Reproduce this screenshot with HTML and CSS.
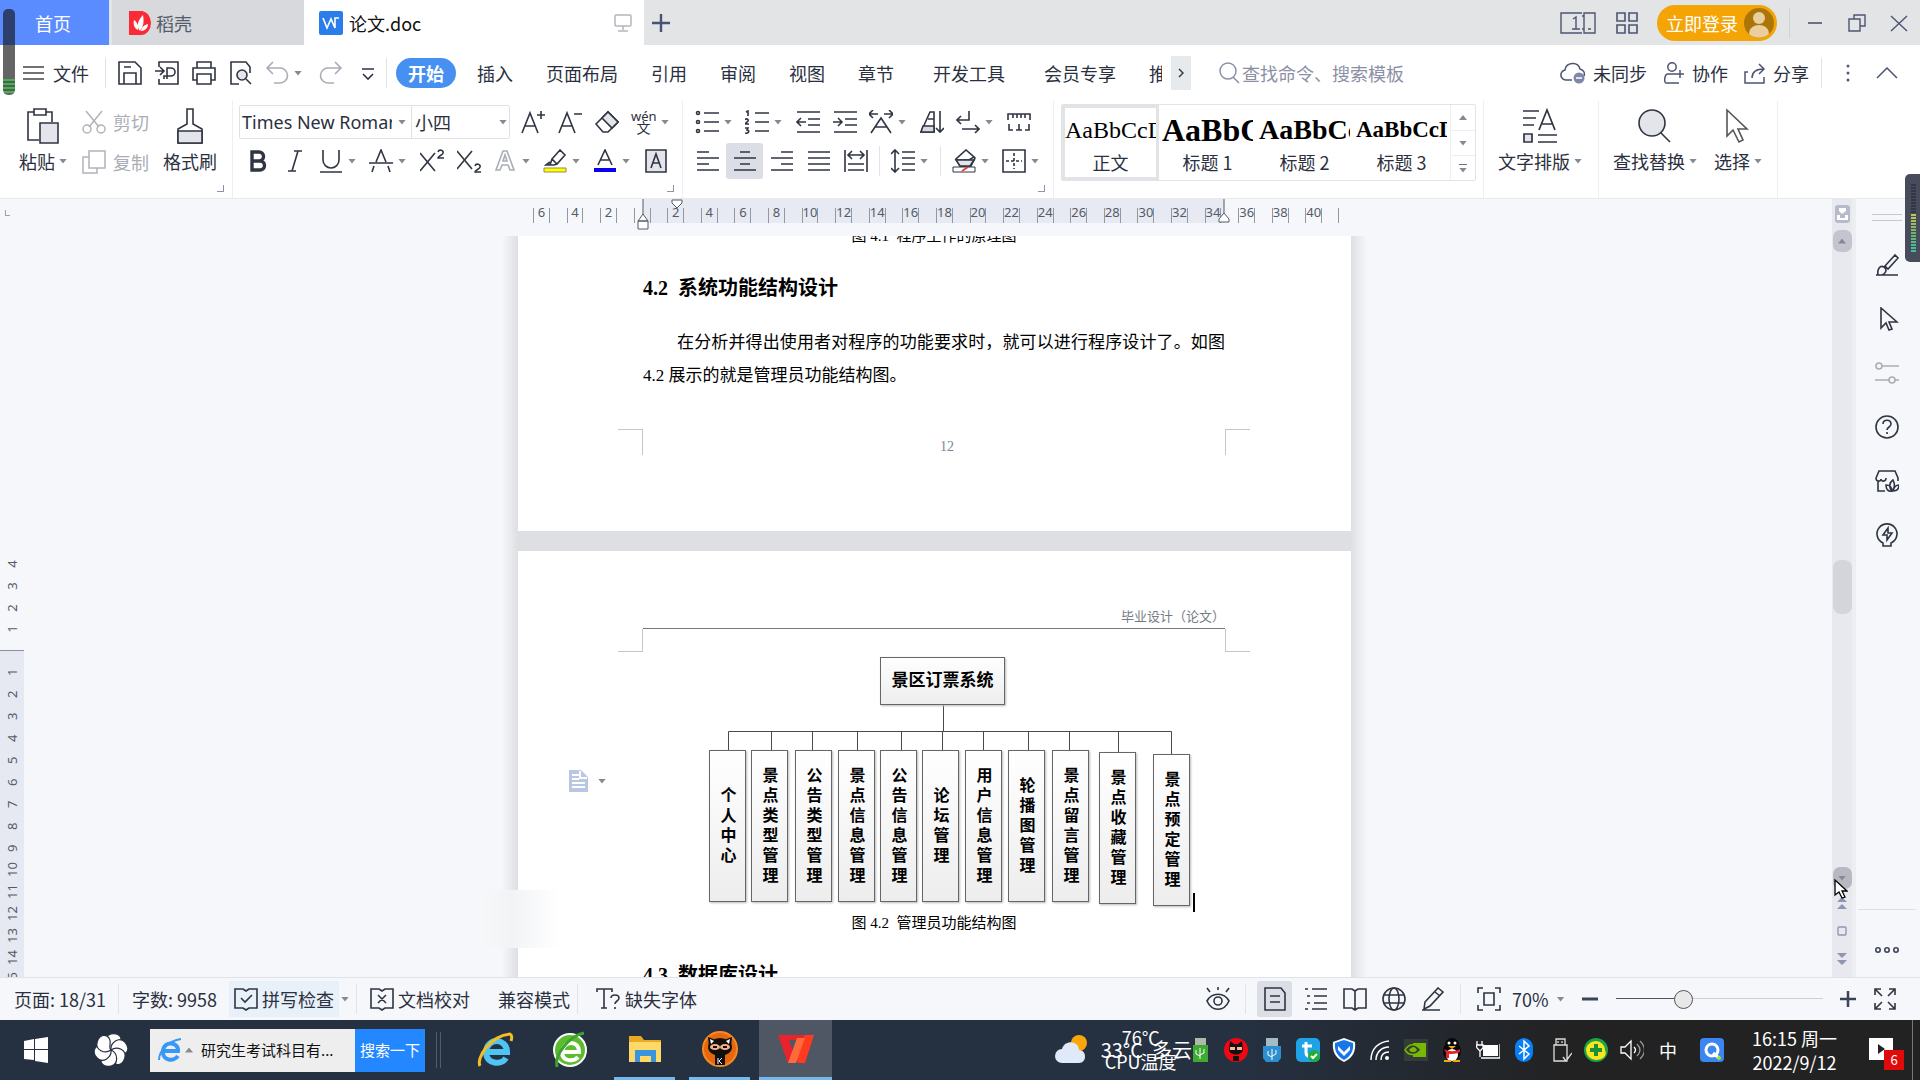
FILE: index.html
```html
<!DOCTYPE html>
<html lang="zh-CN">

<head>
<meta charset="utf-8">
<title>论文.doc</title>
<link rel="stylesheet" href="styles.css">
</head>

<body>

<header class="titlebar">
  <button type="button" class="tab tab-home">首页</button>
  <button type="button" class="tab tab-store">
    <svg width="22" height="24" viewBox="0 0 22 24"><path d="M0 0h12a10 12 0 0 1 0 24H0z" fill="#fb2a36"/><path d="M11 20C7 15 9 9 14 4c1 6 1 11-3 16zM9 19c-4-2-5-6-4-10 3 2 5 6 4 10zM12 20c1-4 3-6 7-7 0 4-3 7-7 7z" fill="#fff"/></svg>
    稻壳
  </button>
  <button type="button" class="tab tab-doc">
    <svg width="24" height="24" viewBox="0 0 24 24"><rect width="24" height="24" rx="2" fill="#2b7de9"/><path d="M4 7l4 10 4-9 4 9V7h4" fill="none" stroke="#fff" stroke-width="1.6"/></svg>
    论文.doc
    <svg class="tab-screen" width="18" height="18" viewBox="0 0 18 18" fill="none" stroke="#b3b6bd" stroke-width="1.5"><rect x="1" y="1" width="16" height="11" rx="1"/><path d="M9 12v4M4 17h10"/></svg>
  </button>
  <button type="button" class="tab-add" aria-label="新建"><svg width="20" height="20" viewBox="0 0 20 20" stroke="#4a5273" stroke-width="2.4"><path d="M10 1v18M1 10h18"/></svg></button>
  <div class="window-tools">
    <button type="button" aria-label="分屏"><svg width="36" height="24" viewBox="0 0 36 24" fill="none" stroke="#4d5470" stroke-width="1.4"><path d="M22 2H1v20h21"/><path d="M13 8l3-2v12M12 18h8M24 2h11v20H24zM28 18h3M22 5h2M22 18h2"/></svg></button>
    <button type="button" aria-label="应用"><svg width="22" height="22" viewBox="0 0 22 22" fill="none" stroke="#4d5470" stroke-width="1.6"><path d="M1 1h8v8H1zM13 1h8v8h-8zM1 13h8v8H1zM13 13h8v8h-8z"/></svg></button>
    <button type="button" class="login">立即登录
      <svg width="30" height="30" viewBox="0 0 30 30"><circle cx="15" cy="15" r="15" fill="#ab7508"/><circle cx="15" cy="10" r="6" fill="#e8cf9c"/><path d="M5 26c0-12 20-12 20 0a15 15 0 0 1-20 0z" fill="#e8cf9c"/></svg>
    </button>
    <i class="rule"></i>
    <button type="button" aria-label="最小化"><svg width="18" height="18" viewBox="0 0 18 18" stroke="#4d5470" stroke-width="1.6"><path d="M2 9h14"/></svg></button>
    <button type="button" aria-label="还原"><svg width="18" height="18" viewBox="0 0 18 18" fill="none" stroke="#4d5470" stroke-width="1.4"><path d="M1 5h11v12H1zM6 5V1h11v11h-5"/></svg></button>
    <button type="button" aria-label="关闭"><svg width="18" height="18" viewBox="0 0 18 18" stroke="#4d5470" stroke-width="1.4"><path d="M1 2l16 15M17 2L1 17"/></svg></button>
  </div>
</header>

<nav class="menubar">
  <button type="button" class="file">
    <svg width="21" height="16" viewBox="0 0 21 16" stroke="#444" stroke-width="1.3"><path d="M0 2h21M0 8h21M0 14h21"/></svg>
    文件
  </button>
  <i class="rule"></i>
  <div class="quick">
    <button type="button" class="tool" aria-label="保存"><svg class="ico" viewBox="0 0 24 24"><path d="M1 1h16l6 6v16H1zM6 23V12h12v11M6 6h7"/></svg></button>
    <button type="button" class="tool" aria-label="输出"><svg class="ico" viewBox="0 0 24 24"><path d="M4 6V1h19v22H4v-5M0 10h8M5 6l4 4-4 4M12 18V7h4a4 4 0 0 1 0 8h-7v3"/></svg></button>
    <button type="button" class="tool" aria-label="打印"><svg class="ico" viewBox="0 0 24 24"><path d="M5 7V1h14v6M5 19H1V7h22v12h-4M5 13h14v10H5z"/></svg></button>
    <button type="button" class="tool" aria-label="打印预览"><svg class="ico" viewBox="0 0 24 24"><path d="M10 23H2V1h15l4 5v6"/><circle cx="13" cy="14" r="5" fill="#e3e5ea"/><path d="M17 18l5 5"/></svg></button>
    <button type="button" class="tool tool-menu off" aria-label="撤销"><svg class="ico" viewBox="0 0 24 24"><path d="M8 1L2 7l6 6M2 7h13a7 7 0 0 1 0 15H9"/></svg><i class="caret"></i></button>
    <button type="button" class="tool off" aria-label="恢复"><svg class="ico" viewBox="0 0 24 24"><path d="M16 1l6 6-6 6M22 7H9a7 7 0 0 0 0 15h6"/></svg></button>
    <button type="button" class="tool" aria-label="更多"><svg class="ico" viewBox="0 0 24 24"><path d="M6 8h12M7 13l5 5 5-5"/></svg></button>
  </div>
  <i class="rule"></i>
  <div class="tabs">
    <button type="button" class="active">开始</button>
    <button type="button">插入</button>
    <button type="button">页面布局</button>
    <button type="button">引用</button>
    <button type="button">审阅</button>
    <button type="button">视图</button>
    <button type="button">章节</button>
    <button type="button" class="spaced">开发工具</button>
    <button type="button" class="spaced">会员专享</button>
    <button type="button">推荐</button>
  </div>
  <button type="button" class="tabs-next" aria-label="下一组"><svg width="6" height="10" viewBox="0 0 6 10" fill="none" stroke="#333" stroke-width="1.4"><path d="M1 1l4 4-4 4"/></svg></button>
  <label class="search">
    <svg width="22" height="22" viewBox="0 0 22 22" fill="none" stroke="#8b90a5" stroke-width="1.5"><circle cx="10" cy="9" r="8"/><path d="M15 15l6 6"/></svg>
    <input type="text" placeholder="查找命令、搜索模板" aria-label="查找命令">
  </label>
  <div class="share">
    <button type="button"><svg width="26" height="22" viewBox="0 0 26 22" fill="none" stroke="#4d5470" stroke-width="1.5"><path d="M12 18H7A5 5 0 0 1 5 8C6 0 18-1 20 7c4 1 5 4 4 7"/><circle cx="19" cy="16" r="5.500" fill="#7f87a8" stroke="none"/><path d="M16 16h6" stroke="#fff"/></svg>未同步</button>
    <button type="button"><svg width="22" height="22" viewBox="0 0 22 22" fill="none" stroke="#4d5470" stroke-width="1.5"><circle cx="9" cy="5" r="4.200"/><path d="M14 12H5c-4 0-4 9-2 9h13M17 8v8M13 12h8"/></svg>协作</button>
    <button type="button"><svg width="22" height="22" viewBox="0 0 22 22" fill="none" stroke="#4d5470" stroke-width="1.5"><path d="M15 2l5 5-5 5M20 7c-8 0-12 3-12 9M4 10H1v11h19v-6"/></svg>分享</button>
    <i class="rule"></i>
    <button type="button" class="dots" aria-label="更多"><svg width="4" height="18" viewBox="0 0 4 18" fill="#555c72"><circle cx="2" cy="2" r="1.500"/><circle cx="2" cy="9" r="1.500"/><circle cx="2" cy="16" r="1.500"/></svg></button>
    <button type="button" aria-label="收起"><svg width="22" height="12" viewBox="0 0 22 12" fill="none" stroke="#4d5470" stroke-width="1.5"><path d="M1 11L11 1l10 10"/></svg></button>
  </div>
</nav>

<section class="ribbon">
  <div class="group clipboard">
    <button type="button" class="big paste">
      <svg width="34" height="36" viewBox="0 0 34 36" fill="none" stroke="#2f3542" stroke-width="1.6"><path d="M8 4H2v28h11M20 4h6v10M8 1h12v6H8z"/><path d="M14 15h18v20H14z" fill="#e3e5ea"/></svg>
      <span>粘贴<i class="caret"></i></span>
    </button>
    <div class="stack">
      <button type="button"><svg width="24" height="24" viewBox="0 0 24 24" fill="none" stroke="#b0b3ba" stroke-width="1.5"><path d="M4 1l13 16M20 1L7 17"/><circle cx="5" cy="19" r="4"/><circle cx="19" cy="19" r="4"/></svg>剪切</button>
      <button type="button"><svg width="24" height="24" viewBox="0 0 24 24" fill="none" stroke="#b0b3ba" stroke-width="1.5"><path d="M7 1h16v17H7zM7 7H1v16h14v-5"/></svg>复制</button>
    </div>
    <button type="button" class="big brush">
      <svg width="30" height="36" viewBox="0 0 30 36" fill="none" stroke="#2f3542" stroke-width="1.6"><path d="M12 16V1h6v15l9 5v14H3V21z"/><path d="M3 23h24v12H3z" fill="#e3e5ea"/></svg>
      <span>格式刷</span>
    </button>
    <i class="corner"></i>
  </div>

  <div class="group font">
    <div class="row">
      <div class="combo"><input type="text" class="family" value="Times New Roman" aria-label="字体"><i class="caret"></i><input type="text" class="size" value="小四" aria-label="字号"><i class="caret"></i></div>
      <button type="button" class="tool" aria-label="增大字号"><svg class="ico" viewBox="0 0 24 24"><path d="M1 23L9 3l8 20M4 16h10M16 5h8M20 1v8"/></svg></button>
      <button type="button" class="tool" aria-label="减小字号"><svg class="ico" viewBox="0 0 24 24"><path d="M1 23L9 3l8 20M4 16h10M16 4h8"/></svg></button>
      <button type="button" class="tool" aria-label="清除格式"><svg class="ico" viewBox="0 0 24 24"><path d="M1 14L13 2l10 10-10 10H8z"/><path d="M7 8l6-6 10 10-6 6z" fill="#e3e5ea"/></svg></button>
      <button type="button" class="tool tool-menu pinyin"><span>wén<b>文</b></span><i class="caret"></i></button>
    </div>
    <div class="row">
      <button type="button" class="tool" aria-label="加粗"><svg class="ico heavy" viewBox="0 0 24 24"><path d="M6 3h7a4 4 0 0 1 0 9H6zM6 12h8a4 4 0 0 1 0 9H6z"/></svg></button>
      <button type="button" class="tool" aria-label="倾斜"><svg class="ico" viewBox="0 0 24 24"><path d="M11 2h8M5 22h8M15 2L9 22"/></svg></button>
      <button type="button" class="tool tool-menu" aria-label="下划线"><svg class="ico" viewBox="0 0 24 24"><path d="M4 1v10a8 8 0 0 0 16 0V1M1 23h22"/></svg><i class="caret"></i></button>
      <button type="button" class="tool tool-menu" aria-label="删除线"><svg class="ico" viewBox="0 0 24 24"><path d="M7 13l5-12 5 12M5 17l-2 6M19 17l2 6M0 14h24"/></svg><i class="caret"></i></button>
      <button type="button" class="tool" aria-label="上标"><svg class="ico" viewBox="0 0 24 24"><path d="M0 4l15 18M15 4L0 22M18 3c1-3 6-2 5 1 0 2-5 3-5 5h6"/></svg></button>
      <button type="button" class="tool" aria-label="下标"><svg class="ico" viewBox="0 0 24 24"><path d="M0 2l15 18M15 2L0 20M18 17c1-3 6-2 5 1 0 2-5 3-5 5h6"/></svg></button>
      <button type="button" class="tool tool-menu off" aria-label="文字效果"><svg class="ico" viewBox="0 0 24 24"><path d="M3 21L10 2h4l7 19h-4l-2-5H9l-2 5zM10 12h4l-2-6z"/></svg><i class="caret"></i></button>
      <button type="button" class="tool tool-menu" aria-label="突出显示"><svg class="ico" viewBox="0 0 24 24"><path d="M9 10l8-9 5 5-8 9zM9 10l-2 6h4l3-1M7 13l-4 3h5"/><path d="M1 19h22v4H1z" fill="#ff0" stroke="#8f8f4a" stroke-width="1"/></svg><i class="caret"></i></button>
      <button type="button" class="tool tool-menu" aria-label="字体颜色"><svg class="ico" viewBox="0 0 24 24"><path d="M5 16l7-15 7 15M8 11h8"/><path d="M1 19h22v4H1z" fill="#0a00f0" stroke="none"/></svg><i class="caret"></i></button>
      <button type="button" class="tool" aria-label="字符底纹"><svg class="ico" viewBox="0 0 24 24"><path d="M2 1h20v22H2z" fill="#e3e5ea"/><path d="M7 19l5-14 5 14M9 14h6"/></svg></button>
    </div>
    <i class="corner"></i>
  </div>

  <div class="group para">
    <div class="row">
      <button type="button" class="tool tool-menu" aria-label="项目符号"><svg class="ico" viewBox="0 0 24 24"><path d="M9 3h15M9 12h15M9 21h15"/><circle cx="3" cy="3" r="1.500"/><circle cx="3" cy="12" r="1.500"/><circle cx="3" cy="21" r="1.500"/></svg><i class="caret"></i></button>
      <button type="button" class="tool tool-menu" aria-label="编号"><svg class="ico" viewBox="0 0 24 24"><path d="M10 3h14M10 12h14M10 21h14M1 2l2-1v5M0 10c1-2 4-1 3 1l-3 3h4M0 18h3l-1 2c3 0 2 4-2 3"/></svg><i class="caret"></i></button>
      <button type="button" class="tool" aria-label="减少缩进"><svg class="ico" viewBox="0 0 24 24"><path d="M1 2h23M12 9h12M12 15h12M1 22h23M10 12H1M5 8l-4 4 4 4"/></svg></button>
      <button type="button" class="tool" aria-label="增加缩进"><svg class="ico" viewBox="0 0 24 24"><path d="M1 2h23M12 9h12M12 15h12M1 22h23M0 12h8M5 8l4 4-4 4"/></svg></button>
      <button type="button" class="tool tool-menu" aria-label="中文版式"><svg class="ico" viewBox="0 0 24 24"><path d="M2 23L12 8l10 15M6 17h12M0 4h9M4 0L0 4l4 4M24 4h-9M20 0l4 4-4 4"/></svg><i class="caret"></i></button>
      <button type="button" class="tool" aria-label="排序"><svg class="ico" viewBox="0 0 24 24"><path d="M1 22L10 2h4v20z"/><path d="M3 16h11v6H1z" fill="#d9dbe0"/><path d="M8 9h6M20 1v21M16 18l4 4 4-4"/></svg></button>
      <button type="button" class="tool tool-menu" aria-label="显示标记"><svg class="ico" viewBox="0 0 24 24"><path d="M13 1v9H1M5 6l-4 4 4 4M6 19h17M19 15l4 4-4 4"/></svg><i class="caret"></i></button>
      <button type="button" class="tool" aria-label="制表位"><svg class="ico" viewBox="0 0 24 24"><path d="M1 10V4h22v6M6 4v4M10 4v4M14 4v4M18 4v4M2 14v6h4M22 14v6h-4M9 20h6M12 20v-6"/></svg></button>
    </div>
    <div class="row">
      <button type="button" class="tool" aria-label="左对齐"><svg class="ico" viewBox="0 0 24 24"><path d="M1 3h12M1 9h22M1 15h12M1 21h22"/></svg></button>
      <button type="button" class="tool on" aria-label="居中"><svg class="ico" viewBox="0 0 24 24"><path d="M7 3h10M1 9h22M7 15h10M1 21h22"/></svg></button>
      <button type="button" class="tool" aria-label="右对齐"><svg class="ico" viewBox="0 0 24 24"><path d="M11 3h12M1 9h22M11 15h12M1 21h22"/></svg></button>
      <button type="button" class="tool" aria-label="两端对齐"><svg class="ico" viewBox="0 0 24 24"><path d="M1 3h22M1 9h22M1 15h22M1 21h22"/></svg></button>
      <button type="button" class="tool" aria-label="分散对齐"><svg class="ico" viewBox="0 0 24 24"><path d="M1 1v22M23 1v22M4 15h16M4 21h16M4 6h16M8 2L4 6l4 4M16 2l4 4-4 4"/></svg></button>
      <i class="rule"></i>
      <button type="button" class="tool tool-menu" aria-label="行距"><svg class="ico" viewBox="0 0 24 24"><path d="M11 3h13M11 9h13M11 15h13M11 21h13M4 1v22M0 5l4-4 4 4M0 19l4 4 4-4"/></svg><i class="caret"></i></button>
      <i class="rule"></i>
      <button type="button" class="tool tool-menu" aria-label="底纹"><svg class="ico" viewBox="0 0 24 24"><path d="M5 11h12l5-3-8-7-10 9 4 7h11l4-8-2-2"/><path d="M4 11h18l-4 6H8z" fill="#e3e5ea"/><path d="M1 18h22v5H1z" stroke-width="1" fill="#fff"/><path d="M10 22l6-4" stroke="#e33"/></svg><i class="caret"></i></button>
      <button type="button" class="tool tool-menu" aria-label="边框"><svg class="ico" viewBox="0 0 24 24"><path d="M1 1h22v22H1z"/><path d="M12 4v16M4 12h16" stroke-dasharray="3 2"/></svg><i class="caret"></i></button>
    </div>
    <i class="corner"></i>
  </div>

  <div class="group styles">
    <div class="gallery">
      <button type="button" class="style picked"><span class="body-text">AaBbCcDd</span>正文</button>
      <button type="button" class="style"><span class="h1">AaBbCc</span>标题 1</button>
      <button type="button" class="style"><span class="h2">AaBbCc</span>标题 2</button>
      <button type="button" class="style"><span class="h3">AaBbCcDd</span>标题 3</button>
      <div class="gallery-nav">
        <button type="button" aria-label="上一行"><i class="caret up"></i></button>
        <button type="button" aria-label="下一行"><i class="caret"></i></button>
        <button type="button" class="expand" aria-label="展开"><i class="caret"></i></button>
      </div>
    </div>
  </div>

  <div class="group typeset">
    <button type="button" class="big">
      <svg width="36" height="36" viewBox="0 0 36 36" fill="none" stroke="#2f3542" stroke-width="1.7"><path d="M1 3h16M1 10h13M1 17h11M17 22L25 2l8 20M20 16h10M16 27h19M16 34h19"/><path d="M2 26h8v8H2z" fill="#e3e5ea"/></svg>
      <span>文字排版<i class="caret"></i></span>
    </button>
  </div>

  <div class="group edit">
    <button type="button" class="big">
      <svg width="36" height="36" viewBox="0 0 36 36" fill="none" stroke="#2f3542" stroke-width="1.6"><circle cx="15" cy="15" r="13" fill="#e3e5ea"/><path d="M24 25l9 9"/></svg>
      <span>查找替换<i class="caret"></i></span>
    </button>
    <button type="button" class="big">
      <svg width="36" height="36" viewBox="0 0 36 36" fill="none" stroke="#555" stroke-width="1.6"><path d="M7 2v26l6-6 6 12 4-2-5-11h9z"/></svg>
      <span>选择<i class="caret"></i></span>
    </button>
  </div>
</section>

<main class="workspace">
  <div class="ruler">
    <i class="ruler-tab"></i>
    <div class="scale">
      <span>6</span><span>4</span><span>2</span><span></span><span>2</span><span>4</span><span>6</span><span>8</span><span>10</span><span>12</span><span>14</span><span>16</span><span>18</span><span>20</span><span>22</span><span>24</span><span>26</span><span>28</span><span>30</span><span>32</span><span>34</span><span>36</span><span>38</span><span>40</span>
      <i class="last"></i>
      <svg class="mark mark-first" width="12" height="10" viewBox="0 0 12 10"><path d="M1 1h10v3L6 9 1 4z"/></svg>
      <svg class="mark mark-left" width="12" height="32" viewBox="0 0 12 32"><path d="M6 0v16M1 22l5-7 5 7zM1 22h10v8H1z"/></svg>
      <svg class="mark mark-right" width="12" height="24" viewBox="0 0 12 24"><path d="M6 0v14M1 23v-3l5-6 5 6v3z"/></svg>
    </div>
  </div>

  <div class="vruler">
    <div class="above"><span>4</span><span>3</span><span>2</span><span>1</span></div>
    <div class="below"><span>1</span><span>2</span><span>3</span><span>4</span><span>5</span><span>6</span><span>7</span><span>8</span><span>9</span><span>10</span><span>11</span><span>12</span><span>13</span><span>14</span><span>15</span></div>
  </div>

  <div class="canvas">
    <div class="pages">
      <article class="page">
        <p class="caption caption-cut">图 4.1&nbsp; 程序工作的原理图</p>
        <h2>4.2&nbsp; 系统功能结构设计</h2>
        <p class="text">在分析并得出使用者对程序的功能要求时，就可以进行程序设计了。如图 4.2 展示的就是管理员功能结构图。</p>
        <footer class="margins"><i></i><span>12</span><i></i></footer>
      </article>

      <article class="page page-next">
        <header>毕业设计（论文）</header>
        <div class="margins bottom"><i></i><i></i></div>
        <div class="diagram">
          <svg width="582" height="260" viewBox="0 0 582 260" fill="none" stroke="#4a4a4a"><path d="M300.500 53v26M85.500 98V79.500h443V102M128.500 79v19M169.500 79v19M214.500 79v19M258.500 79v19M299.500 79v19M340.500 79v19M385.500 79v19M426.500 79v19M475.500 79v21"/></svg>
          <div class="root">景区订票系统</div>
          <ul>
            <li><span>个人中心</span></li>
            <li><span>景点类型管理</span></li>
            <li><span>公告类型管理</span></li>
            <li><span>景点信息管理</span></li>
            <li><span>公告信息管理</span></li>
            <li><span>论坛管理</span></li>
            <li><span>用户信息管理</span></li>
            <li><span>轮播图管理</span></li>
            <li><span>景点留言管理</span></li>
            <li><span>景点收藏管理</span></li>
            <li><span>景点预定管理</span></li>
          </ul>
          <i class="cursor"></i>
        </div>
        <p class="caption">图 4.2&nbsp; 管理员功能结构图</p>
        <h2>4.3&nbsp; 数据库设计</h2>
        <div class="paste-options">
          <svg width="19" height="22" viewBox="0 0 19 22"><path d="M0 0h12l7 7v15H0z" fill="#b9c7e4"/><path d="M3 5h7M3 9h7M3 13h13M3 17h13M11 1v7h7" stroke="#fff" stroke-width="2" fill="none"/></svg>
          <i class="caret"></i>
        </div>
        <i class="haze"></i>
      </article>
    </div>
  </div>

  <div class="scrollbar">
    <svg class="scroll-mode" width="15" height="18" viewBox="0 0 15 18"><rect width="15" height="18" rx="3" fill="#b7bacb"/><path d="M4 3h7v3L7 9 4 6zM2 10h3v3h5v-3h3v5H2z" fill="#fff"/></svg>
    <button type="button" class="scroll-up" aria-label="向上"><i class="caret up"></i></button>
    <i class="thumb"></i>
    <button type="button" class="scroll-down" aria-label="向下"><i class="caret"></i></button>
    <div class="browse">
      <svg width="10" height="12" viewBox="0 0 10 12" fill="#8f96b3"><path d="M0 5l5-5 5 5zM0 12l5-5 5 5z"/></svg>
      <svg width="10" height="10" viewBox="0 0 10 10" fill="none" stroke="#8f96b3" stroke-width="1.4"><rect x="1" y="1" width="8" height="8" rx="1"/></svg>
      <svg width="10" height="12" viewBox="0 0 10 12" fill="#8f96b3"><path d="M0 0l5 5 5-5zM0 7l5 5 5-5z"/></svg>
    </div>
    <svg class="pointer" width="14" height="20" viewBox="0 0 14 20"><path d="M1 1v15l4-3 3 6 3-1-3-6h5z" fill="#fff" stroke="#000" stroke-width="1.300"/></svg>
  </div>

  <aside class="sidebar">
    <i class="grip"></i>
    <button type="button" aria-label="样式"><svg class="ico" viewBox="0 0 24 24"><path d="M1 22h22M10 13L20 2l3 3-10 11zM3 22c-1-6 2-10 6-8 4 3 1 7-2 8"/></svg></button>
    <button type="button" aria-label="选择"><svg class="ico" viewBox="0 0 24 24"><path d="M6 1v20l5-5 3 7 3-1-3-7h8z"/></svg></button>
    <button type="button" class="off" aria-label="设置"><svg class="ico" viewBox="0 0 24 24"><circle cx="4" cy="5" r="3"/><path d="M7 5h17M0 19h14M20 19h4"/><circle cx="17" cy="19" r="3"/></svg></button>
    <button type="button" aria-label="帮助"><svg class="ico" viewBox="0 0 24 24"><circle cx="12" cy="12" r="11"/><path d="M8 9c0-5 8-5 8 0 0 3-4 3-4 6M12 17v2"/></svg></button>
    <button type="button" aria-label="素材"><svg class="ico" viewBox="0 0 24 24"><path d="M3 12v10h7M1 9l3-7h16l3 7v3M1 9c0 4 5 4 5 1 0 3 5 3 5-1M17 22c-4-4-2-9 1-11 2 4 2 8-1 11zM17 22c-4 1-6-2-6-6 4 0 6 3 6 6zM18 22c1-4 3-6 6-6 0 4-2 6-6 6z"/></svg></button>
    <button type="button" aria-label="推荐"><svg class="ico" viewBox="0 0 24 24"><path d="M8 23v-3a10 10 0 1 1 8 0v3zM13 5l-5 7h4v5l5-7h-4z"/></svg></button>
    <button type="button" class="more" aria-label="更多"><svg width="24" height="8" viewBox="0 0 24 8" fill="none" stroke="#3d4358" stroke-width="1.6"><circle cx="3" cy="4" r="2.200"/><circle cx="12" cy="4" r="2.200"/><circle cx="21" cy="4" r="2.200"/></svg></button>
  </aside>
</main>

<section class="statusbar">
  <span class="pages-count">页面: 18/31</span>
  <i class="rule"></i>
  <span class="words">字数: 9958</span>
  <button type="button" class="spell"><svg class="ico" viewBox="0 0 24 24"><path d="M1 2h8l3 2 3-2h8v19h-8l-3 2-3-2H1zM7 11l4 4 7-7"/></svg>拼写检查</button>
  <i class="caret"></i>
  <i class="rule"></i>
  <button type="button" class="proof"><svg class="ico" viewBox="0 0 24 24"><path d="M1 2h8l3 2 3-2h8v19h-8l-3 2-3-2H1zM8 8l8 8M16 8l-8 8"/></svg>文档校对</button>
  <span class="compat">兼容模式</span>
  <i class="rule"></i>
  <button type="button" class="fonts"><svg class="ico" viewBox="0 0 24 24"><path d="M1 5V2h15v3M8 2v19M5 21h6M15 11c0-4 8-4 8 0 0 3-4 3-4 6M19 20v2"/></svg>缺失字体</button>
  <div class="views">
    <button type="button" class="tool" aria-label="护眼模式"><svg class="ico" viewBox="0 0 24 24"><path d="M1 14c5-9 17-9 22 0-5 11-17 11-22 0zM12 0v3M1 1l3 4M23 1l-3 4"/><circle cx="12" cy="14" r="4"/></svg></button>
    <i class="rule"></i>
    <button type="button" class="tool on" aria-label="页面视图"><svg class="ico" viewBox="0 0 24 24"><path d="M2 1h16l4 5v17H2zM7 9h10M7 15h10"/></svg></button>
    <button type="button" class="tool" aria-label="大纲"><svg class="ico" viewBox="0 0 24 24"><path d="M1 2h3M8 2h15M3 9h3M10 9h13M3 16h3M10 16h13M1 22h3M8 22h15"/></svg></button>
    <button type="button" class="tool" aria-label="阅读版式"><svg class="ico" viewBox="0 0 24 24"><path d="M1 2h8l3 2 3-2h8v19h-8l-3 2-3-2H1zM12 4v19"/></svg></button>
    <button type="button" class="tool" aria-label="Web版式"><svg class="ico" viewBox="0 0 24 24"><circle cx="12" cy="12" r="11"/><ellipse cx="12" cy="12" rx="5" ry="11"/><path d="M2 8h20M2 16h20"/></svg></button>
    <button type="button" class="tool" aria-label="写作模式"><svg class="ico" viewBox="0 0 24 24"><path d="M4 15L17 1l5 4L9 19l-6 3zM1 23h18M14 5l5 4"/></svg></button>
    <i class="rule"></i>
    <button type="button" class="tool" aria-label="最佳显示比例"><svg class="ico" viewBox="0 0 24 24"><path d="M1 6V1h5M18 1h5v5M23 18v5h-5M6 23H1v-5M7 6h10v12H7z"/></svg></button>
    <button type="button" class="zoom">70%<i class="caret"></i></button>
    <button type="button" class="step" aria-label="缩小"><svg width="16" height="16" viewBox="0 0 16 16" stroke="#3d4358" stroke-width="3"><path d="M0 8h16"/></svg></button>
    <input type="range" min="0" max="100" value="31" aria-label="显示比例">
    <button type="button" class="step plus" aria-label="放大"><svg width="16" height="16" viewBox="0 0 16 16" stroke="#3d4358" stroke-width="2.500"><path d="M0 8h16M8 0v16"/></svg></button>
    <button type="button" class="tool" aria-label="全屏"><svg class="ico" viewBox="0 0 24 24"><path d="M2 8V2h6M2 2l7 7M16 2h6v6M22 2l-7 7M2 16v6h6M2 22l7-7M22 16v6h-6M22 22l-7-7"/></svg></button>
  </div>
</section>

<footer class="taskbar">
  <button type="button" class="start" aria-label="开始菜单"><svg width="26" height="26" viewBox="0 0 26 26" fill="#fff"><path d="M1 4l10-2v10H1zM12 2l13-2v12H12zM1 13h10v10L1 22zM12 13h13v13l-13-2z"/></svg></button>
  <button type="button" class="swirl" aria-label="助手">
    <svg width="34" height="34" viewBox="0 0 34 34" fill="#fff" stroke="#253040" stroke-width="1.200">
      <path id="petal" d="M17 17C10 14 9 3 17 1c8-2 12 4 9 9-2 4-8 3-9 7z"/>
      <use href="#petal" transform="rotate(60 17 17)"/>
      <use href="#petal" transform="rotate(120 17 17)"/>
      <use href="#petal" transform="rotate(180 17 17)"/>
      <use href="#petal" transform="rotate(240 17 17)"/>
      <use href="#petal" transform="rotate(300 17 17)"/>
    </svg>
  </button>
  <form class="desk-search">
    <svg width="26" height="26" viewBox="0 0 26 26" fill="none" stroke="#3898f5"><path d="M5 14h16c1-9-14-11-15 0-1 10 11 11 15 5" stroke-width="4"/><path d="M2 23C2 14 11 4 24 2" stroke-width="2"/></svg>
    <i class="caret up"></i>
    <input type="text" value="研究生考试科目有..." aria-label="搜索">
    <button type="button">搜索一下</button>
  </form>
  <i class="handle"></i>
  <div class="apps">
    <button type="button" aria-label="Internet Explorer"><svg width="38" height="38" viewBox="0 0 38 38" fill="none"><path d="M10 21h21c0-14-20-15-21 0 0 13 16 13 20 6" stroke="#4fc4f3" stroke-width="6"/><path d="M4 35C0 27 14 5 34 3c2 1 2 4 1 7" stroke="#f4bd21" stroke-width="3"/></svg></button>
    <button type="button" aria-label="360浏览器"><svg width="38" height="38" viewBox="0 0 38 38" fill="none"><circle cx="19" cy="19" r="16" fill="#5cbc2e" stroke="#fff" stroke-width="2"/><path d="M11 21h17c0-12-15-12-17 0 0 10 12 10 16 5" stroke="#fff" stroke-width="4"/><path d="M6 36C3 24 18 5 33 2" stroke="#3ea32b" stroke-width="3"/></svg></button>
    <button type="button" class="open" aria-label="资源管理器"><svg width="36" height="32" viewBox="0 0 36 32"><path d="M2 3h12l3 4h17v22H2z" fill="#e9aa23"/><path d="M2 9h32v20H2z" fill="#ffd968"/><path d="M8 17h21v12h-5v-6H13v6H8z" fill="#3a94dc"/></svg></button>
    <button type="button" class="open" aria-label="游戏助手"><svg width="38" height="38" viewBox="0 0 38 38"><circle cx="19" cy="19" r="17" fill="#e9670c" stroke="#f58a25" stroke-width="2"/><ellipse cx="19" cy="17" rx="12" ry="9" fill="#111"/><path d="M7 7l8 3-7 7zM31 7l-8 3 7 7zM14 25h10v10H14z" fill="#111"/><path d="M9 9l4 2-3 3zM29 9l-4 2 3 3z" fill="#fff"/><ellipse cx="14" cy="17" rx="5" ry="3" fill="#f8b183"/><ellipse cx="24" cy="17" rx="5" ry="3" fill="#f8b183"/><path d="M12 17h4M22 17h4" stroke="#111" stroke-width="2"/><path d="M17 28v6M21 28l-3 3 3 3" stroke="#fff" fill="none"/></svg></button>
    <button type="button" class="open current" aria-label="WPS"><svg width="38" height="30" viewBox="0 0 38 30"><path d="M1 1h27l-2 5H12l5 14-4 9h-2z" fill="#e8232c"/><path d="M28 1h9L28 29h-7l-3-8z" fill="#ff3a20"/><path d="M20 4h8l-9 25h-8z" fill="#ff6a3b"/></svg></button>
  </div>
  <div class="tray">
    <div class="weather">
      <svg width="34" height="32" viewBox="0 0 34 32"><circle cx="25" cy="9" r="8" fill="#fba70c"/><path d="M8 29a7 7 0 0 1 0-14c3-10 17-8 17 1 8 0 8 13 0 13z" fill="#dfe9f7"/></svg>
      <span>33°C&nbsp; 多云</span>
      <p class="cpu">76℃<br>CPU温度</p>
    </div>
    <svg class="tray-ico" viewBox="0 0 24 24"><path d="M7 0h11v7H7z" fill="#aeb8ad"/><path d="M5 7h15v17H5z" fill="#3faa32"/><path d="M12 21V10M8 12v4l4 2M16 11v4l-4 2" stroke="#fff" fill="none"/></svg>
    <svg class="tray-ico" viewBox="0 0 24 24"><circle cx="12" cy="12" r="12" fill="#f00713"/><path d="M6 3l4 3h4l4-3 1 9c-1 6-13 6-14 0zM9 18h6v5H9z" fill="#111"/><path d="M6 9h5v3H6zM13 9h5v3h-5z" fill="#f6b79a"/></svg>
    <svg class="tray-ico" viewBox="0 0 24 24"><path d="M6 0h12v8H6z" fill="#a4bac7"/><path d="M3 8h18v12l-3 4H6l-3-4z" fill="#2c8fcf"/><path d="M12 22V11M8 13v4l4 2M16 12v4l-4 2" stroke="#fff" fill="none"/></svg>
    <svg class="tray-ico" viewBox="0 0 24 24"><rect width="24" height="24" rx="5" fill="#1fa3e8"/><path d="M10 4v10c0 6 7 5 8 1M6 8h10" stroke="#fff" stroke-width="3" fill="none"/><circle cx="18" cy="18" r="6" fill="#1fad3a"/><path d="M15 18l2 2 4-4" stroke="#fff" stroke-width="2" fill="none"/></svg>
    <svg class="tray-ico" viewBox="0 0 24 24"><path d="M12 0l11 4c1 9-2 16-11 20C3 20 0 13 1 4z" fill="#fff"/><path d="M12 2l9 3c1 7-2 13-9 17C5 18 2 12 3 5z" fill="#1677ea"/><path d="M6 8l6 6 6-6v4l-6 6-6-6z" fill="#fff"/></svg>
    <svg class="tray-ico" viewBox="0 0 24 24"><path d="M3 22C3 11 10 4 21 3M8 22c0-7 5-13 13-13M13 22c0-5 3-8 8-8" fill="none" stroke="#fff" stroke-width="1.500"/><circle cx="19" cy="20" r="2" fill="#fff"/></svg>
    <svg class="tray-ico" viewBox="0 0 24 24"><path d="M0 1h24v22H0z" fill="#353b37"/><path d="M9 5h13v14H9z" fill="#75b900"/><path d="M1 12c4-7 11-7 16 0-5 6-12 6-16 0z" fill="#353b37" stroke="#75b900" stroke-width="1.500"/><path d="M5 12c3-4 6-4 8 0-2 3-6 3-8 0" fill="#75b900"/></svg>
    <svg class="tray-ico" viewBox="0 0 24 24"><ellipse cx="12" cy="13" rx="9" ry="10" fill="#080808"/><circle cx="12" cy="7" r="7" fill="#080808"/><ellipse cx="12" cy="17" rx="6" ry="6" fill="#fff"/><circle cx="9" cy="5" r="1.500" fill="#fff"/><circle cx="15" cy="5" r="1.500" fill="#fff"/><path d="M8 8h8l-4 3zM4 22h7v2H4zM13 22h7v2h-7z" fill="#f7a800"/><path d="M4 11c5 3 11 3 16 0v3c-4 2-8 2-11 2v4H6v-5z" fill="#e1232c"/></svg>
    <svg class="tray-ico" viewBox="0 0 24 24"><path d="M7 7h15v11H7z" fill="#fff"/><path d="M5 20h19V6M1 3v4M6 3v4M0 7h7v3l-3 3-3-3zM4 13v6" fill="none" stroke="#fff" stroke-width="1.300"/></svg>
    <svg class="tray-ico" viewBox="0 0 24 24"><rect x="3" width="18" height="24" rx="9" fill="#087ff5"/><path d="M7 8l10 8-5 5V3l5 5-10 8" fill="none" stroke="#fff" stroke-width="1.500"/></svg>
    <svg class="tray-ico" viewBox="0 0 24 24" fill="none" stroke="#ddd" stroke-width="1.300"><path d="M8 1h9v6H8zM6 7h13v16H6zM10 3v2M14 3v2M15 19l3 4 6-8"/></svg>
    <svg class="tray-ico" viewBox="0 0 24 24"><circle cx="12" cy="12" r="12" fill="#18a548"/><path d="M12 3a9 9 0 0 1 9 9c3 6-3 10-9 10A10 10 0 0 1 2 12C2 7 7 3 12 3z" fill="#fbe41c"/><path d="M12 6v12M6 12h12" stroke="#18903c" stroke-width="4"/></svg>
    <svg class="tray-ico" viewBox="0 0 24 24" fill="none" stroke="#fff" stroke-width="1.300"><path d="M1 9h4l6-6v18l-6-6H1zM14 9c2 2 2 4 0 6"/><path d="M17 6c4 4 4 8 0 12M20 3c6 6 6 12 0 18" stroke="#999"/></svg>
    <span class="ime">中</span>
    <svg class="tray-ico qb" viewBox="0 0 24 24"><rect width="24" height="24" rx="4" fill="#3b86f0"/><circle cx="12" cy="12" r="6" fill="none" stroke="#fff" stroke-width="3"/><path d="M13 15l6 5" stroke="#fff" stroke-width="3"/><circle cx="19" cy="20" r="2" fill="#a0e52b"/></svg>
    <time>16:15 周一<br>2022/9/12</time>
    <div class="notice"><svg width="24" height="24" viewBox="0 0 24 24"><path d="M0 0h24v22H0z" fill="#fff"/><path d="M9 6l7 5-7 5z" fill="#222"/></svg><b>6</b></div>
    <i class="peek"></i>
  </div>
</footer>

<i class="meter meter-left"></i>
<i class="meter meter-right"></i>

</body>
</html>
```
FILE: styles.css
```css
* {
  box-sizing: border-box;
}

body {
  margin: 0;
  height: 100vh;
  display: flex;
  flex-direction: column;
  overflow: hidden;
  background: #f5f7fa;
  color: #2b3040;
  font: 18px/24px "Noto Sans CJK SC", sans-serif;
}

button,
input {
  margin: 0;
  padding: 0;
  border: 0;
  background: none;
  color: inherit;
  font: inherit;
}

button {
  display: flex;
  align-items: center;
  white-space: nowrap;
}

svg {
  flex: none;
  display: block;
}

/* общие мелочи: значки, стрелки, разделители */

.ico {
  width: 24px;
  height: 24px;
  fill: none;
  stroke: #2f3542;
  stroke-width: 1.6;
}

.heavy {
  stroke-width: 3.4;
}

.off .ico {
  stroke: #a9adb5;
}

.caret {
  flex: none;
  width: 8px;
  height: 5px;
  background: #858996;
  clip-path: polygon(0 0, 100% 0, 50% 100%);
}

.caret.up {
  clip-path: polygon(0 100%, 100% 100%, 50% 0);
}

.rule {
  flex: none;
  width: 1px;
  height: 30px;
  background: #e1e3e7;
}

.tool {
  flex: none;
  width: 37px;
  height: 36px;
  justify-content: center;
}

.tool-menu {
  width: 50px;
  justify-content: flex-start;
  gap: 5px;
  padding-left: 6px;
}

.tool.on {
  background: #dbdee4;
  border-radius: 3px;
}

/* заголовок окна */

.titlebar {
  flex: none;
  height: 45px;
  display: flex;
  align-items: stretch;
  background: #e2e4e6;
}

.tab-home {
  width: 109px;
  padding-left: 35px;
  background: #5b8cff;
  color: #fff;
}

.tab-store {
  width: 192px;
  margin-left: 3px;
  padding-left: 17px;
  gap: 5px;
  background: #d7d9dc;
  color: #555b6b;
}

.tab-doc {
  width: 340px;
  padding: 0 12px 0 15px;
  gap: 6px;
  background: #fff;
  color: #111;
}

.tab-screen {
  margin-left: auto;
}

.tab-add {
  padding-left: 7px;
}

.window-tools {
  margin-left: auto;
  padding-right: 12px;
  display: flex;
  align-items: center;
}

.window-tools button {
  margin-left: 20px;
}

.window-tools .login {
  height: 36px;
  margin: 0 12px 0 19px;
  padding: 0 3px 0 9px;
  gap: 6px;
  border-radius: 18px;
  background: #f5a406;
  color: #fff;
}

.window-tools .rule {
  background: #cfd2d8;
}

.window-tools .rule + button {
  margin-left: 16px;
}

.window-tools .rule ~ button + button {
  margin-left: 24px;
}

/* меню */

.menubar {
  flex: none;
  height: 56px;
  display: flex;
  align-items: center;
  background: #fff;
}

.file {
  gap: 9px;
  margin: 0 16px 0 23px;
}

.quick {
  display: flex;
  padding-left: 5px;
}

.quick .tool-menu {
  width: 53px;
}

.tabs {
  display: flex;
  width: 775px;
  gap: 9px;
  padding-left: 9px;
  overflow: hidden;
}

.tabs button {
  flex: none;
  height: 30px;
  padding: 0 12px;
}

.tabs .active {
  border-radius: 15px;
  background: #4690f2;
  color: #fff;
  font-weight: bold;
}

.tabs .spaced {
  margin-left: 6px;
}

.tabs-next {
  width: 20px;
  height: 34px;
  margin-left: 9px;
  justify-content: center;
  background: #e6eaec;
}

.search {
  display: flex;
  align-items: center;
  gap: 2px;
  margin-left: 27px;
}

.search input {
  width: 190px;
}

.search input::placeholder {
  color: #8b90a5;
  opacity: 1;
}

.share {
  margin-left: auto;
  padding-right: 22px;
  display: flex;
  align-items: center;
}

.share button {
  gap: 7px;
  margin-left: 16px;
}

.share .rule {
  margin-left: 12px;
}

.share .dots {
  margin: 0 10px 0 24px;
}

/* лента */

.ribbon {
  flex: none;
  height: 98px;
  display: flex;
  background: #fff;
  border-bottom: 1px solid #e6e8eb;
}

.group {
  flex: none;
  position: relative;
  padding-top: 3px;
  border-right: 1px solid #eceef1;
}

.row {
  height: 36px;
  margin-bottom: 3px;
  display: flex;
  align-items: center;
}

.row .rule {
  margin: 0 5px;
}

.corner {
  position: absolute;
  right: 8px;
  bottom: 6px;
  width: 7px;
  height: 7px;
  border: solid #8d93a8;
  border-width: 0 1px 1px 0;
}

.big {
  height: 76px;
  flex-direction: column;
  align-items: center;
  gap: 5px;
  padding-top: 4px;
}

.big span {
  display: flex;
  align-items: center;
  gap: 4px;
}

.clipboard {
  display: flex;
  width: 233px;
  padding-left: 19px;
}

.stack {
  margin-left: 15px;
  display: flex;
  flex-direction: column;
  gap: 4px;
  color: #a9adb5;
}

.stack button {
  height: 36px;
  gap: 7px;
}

.brush {
  margin-left: 14px;
}

.font {
  width: 450px;
  padding-left: 6px;
}

.combo {
  width: 271px;
  height: 34px;
  margin-right: 4px;
  display: flex;
  align-items: center;
  border: 1px solid #dfe1e5;
  border-radius: 2px;
}

.combo .family {
  width: 152px;
  margin-right: 6px;
  padding-left: 2px;
  font-family: "Noto Sans", sans-serif;
}

.combo .size {
  width: 88px;
  height: 32px;
  margin-left: 5px;
  padding-left: 3px;
  border-left: 1px solid #dfe1e5;
}

.pinyin span {
  width: 25px;
  font: 13px/12px "Noto Sans", "Noto Sans CJK SC", sans-serif;
}

.pinyin b {
  display: block;
  font-size: 14px;
  font-weight: normal;
}

.para {
  width: 371px;
  padding-left: 6px;
}

.styles {
  width: 430px;
  padding: 3px 7px 0;
}

.gallery {
  height: 77px;
  display: flex;
  border: 1px solid #e1e3e6;
  border-radius: 2px;
}

.style {
  width: 97px;
  flex-direction: column;
  padding-top: 3px;
}

.style span {
  width: 91px;
  height: 42px;
  overflow: hidden;
  text-align: left;
  color: #000;
  font: 24px/44px "Liberation Serif", serif;
}

.style.picked {
  padding: 0;
  border: 3px solid #e1e3e6;
}

.style .h1 {
  font-size: 32px;
  font-weight: bold;
}

.style .h2 {
  font-size: 28px;
  font-weight: bold;
}

.style .h3 {
  font-size: 23px;
  font-weight: bold;
}

.gallery-nav {
  flex: 1;
  display: grid;
  grid-template-rows: repeat(3, 1fr);
  border-left: 1px solid #eceef1;
}

.gallery-nav button {
  justify-content: center;
}

.gallery-nav button + button {
  border-top: 1px solid #eceef1;
}

.gallery-nav .expand {
  flex-direction: column;
  gap: 3px;
}

.gallery-nav .expand::before {
  content: "";
  width: 8px;
  height: 1px;
  background: #6c7180;
}

.typeset {
  width: 115px;
  padding-left: 14px;
}

.edit {
  width: 179px;
  display: flex;
  gap: 17px;
  padding-left: 14px;
}

/* рабочая область */

.workspace {
  flex: 1;
  min-height: 0;
  display: grid;
  grid-template: 37px 1fr / 24px 1fr 24px 64px;
}

.ruler {
  grid-column: 1 / 3;
  padding-left: 37px;
  display: flex;
  justify-content: center;
  position: relative;
}

.ruler-tab {
  position: absolute;
  left: 5px;
  top: 11px;
  width: 5px;
  height: 6px;
  border: solid #9aa0ad;
  border-width: 0 0 1px 1px;
}

.scale {
  position: relative;
  width: 806px;
  height: 24px;
  margin-right: -3px;
  display: grid;
  grid-template-columns: repeat(24, 1fr);
  align-items: end;
  background: linear-gradient(#e7eaf2, #e7eaf2) 110px 0 / 581px 24px no-repeat;
}

.scale span {
  width: 50%;
  height: 15px;
  display: flex;
  justify-content: center;
  border: solid #9297a4;
  border-width: 0 1px;
  color: #555a68;
  font: 13px/8px "Noto Sans", sans-serif;
}

.scale .last {
  position: absolute;
  right: 0;
  bottom: 0;
  width: 1px;
  height: 15px;
  background: #9297a4;
}

.mark {
  position: absolute;
  fill: #fff;
  stroke: #555a68;
}

.mark-first {
  left: 138px;
  top: 0;
}

.mark-left {
  left: 104px;
  top: 0;
}

.mark-right {
  left: 685px;
  top: 0;
}

.vruler {
  grid-row: 2;
  display: flex;
  flex-direction: column;
  overflow: hidden;
  padding-top: 317px;
  color: #555a68;
  font: 13px/14px "Noto Sans", sans-serif;
}

.above {
  flex: none;
  height: 98px;
  padding-bottom: 10px;
  display: grid;
  border-bottom: 1px solid #8b90a0;
}

.below {
  flex: 1;
  display: grid;
  grid-auto-rows: 22px;
  padding-top: 10px;
  background: #e6e9f1;
}

.vruler span {
  writing-mode: vertical-rl;
  transform: rotate(180deg);
  text-align: center;
  justify-self: center;
  line-height: 14px;
}

.canvas {
  grid-row: 2;
  overflow: hidden;
  padding-left: 13px;
}

.pages {
  width: 865px;
  margin: 0 auto;
  padding: 0 16px;
  background: linear-gradient(90deg, #f5f7fa, #dddfe2 16px, #dddfe2 849px, #f5f7fa);
}

.page {
  position: relative;
  min-height: 295px;
  padding: 0 126px 0 125px;
  overflow: hidden;
  background: #fff;
  color: #000;
  font-family: "Liberation Serif", "Noto Sans CJK SC", serif;
}

.page-next {
  min-height: 560px;
  margin-top: 20px;
  overflow: visible;
}

.caption {
  margin: 0;
  text-align: center;
  font-size: 15px;
  line-height: 18px;
}

.caption-cut {
  margin-top: -9px;
}

.page h2 {
  margin: 31px 0 0;
  font-size: 20px;
  line-height: 24px;
}

.text {
  margin: 26px 0 0;
  text-indent: 34px;
  text-align: justify;
  font-size: 17px;
  line-height: 33px;
}

.margins {
  display: flex;
  justify-content: space-between;
  margin: 37px -25px 0;
  height: 26px;
  color: #808590;
  font-size: 14px;
  line-height: 36px;
}

.margins i {
  width: 25px;
  border: solid #c4c6ca;
  border-width: 1px 1px 0 0;
}

.margins i:last-child {
  border-width: 1px 0 0 1px;
}

.margins span {
  padding-left: 26px;
}

.margins.bottom {
  margin-top: 0;
  height: 23px;
}

.margins.bottom i {
  border-width: 0 1px 1px 0;
}

.margins.bottom i:last-child {
  border-width: 0 0 1px 1px;
}

.page header {
  padding: 56px 0 1px;
  border-bottom: 1px solid #777;
  text-align: right;
  color: #777b85;
  font-size: 13px;
  line-height: 20px;
}

/* схема: узлы стоят на своих местах */

.diagram {
  position: relative;
  height: 262px;
  font-size: 16px;
  font-weight: bold;
  line-height: 20px;
}

.root,
.diagram li {
  position: absolute;
  display: flex;
  align-items: center;
  justify-content: center;
  border: 1px solid #666;
  background: linear-gradient(#fff, #ededed);
  box-shadow: 1px 1px 2px #bbb;
}

.root {
  left: 237px;
  top: 5px;
  width: 125px;
  height: 48px;
  font-size: 17px;
}

.diagram ul {
  margin: 0;
  padding: 0;
  list-style: none;
}

.diagram li {
  top: 98px;
  width: 37px;
  height: 152px;
  padding-left: 2px;
}

.diagram li span {
  width: 16px;
}

.diagram li:nth-child(1) { left: 66px; }
.diagram li:nth-child(2) { left: 108px; }
.diagram li:nth-child(3) { left: 152px; }
.diagram li:nth-child(4) { left: 195px; }
.diagram li:nth-child(5) { left: 237px; }
.diagram li:nth-child(6) { left: 279px; }
.diagram li:nth-child(7) { left: 322px; }
.diagram li:nth-child(8) { left: 365px; }
.diagram li:nth-child(9) { left: 409px; }
.diagram li:nth-child(10) { left: 456px; top: 100px; }
.diagram li:nth-child(11) { left: 510px; top: 102px; }

.cursor {
  position: absolute;
  left: 550px;
  top: 241px;
  width: 2px;
  height: 19px;
  background: #000;
}

.paste-options {
  position: absolute;
  left: 51px;
  top: 219px;
  display: flex;
  align-items: center;
  gap: 10px;
}

.haze {
  position: absolute;
  left: -38px;
  top: 339px;
  width: 80px;
  height: 58px;
  background: linear-gradient(90deg, #f6f8fa, #f1f3f5 40%, #fff);
}

/* прокрутка и боковая панель */

.scrollbar {
  grid-column: 3;
  grid-row: 1 / 3;
  position: relative;
  padding-right: 4px;
  display: flex;
  flex-direction: column;
  align-items: center;
  background: linear-gradient(90deg, #e7e9ee 20px, #eceef2 20px);
}

.scroll-mode {
  margin: 6px 0 7px;
}

.scroll-up,
.scroll-down {
  width: 19px;
  height: 22px;
  justify-content: center;
  border-radius: 7px;
  background: #c3c4ce;
}

.scroll-down {
  margin-top: auto;
  background: #b7b8c0;
}

.thumb {
  width: 19px;
  height: 54px;
  margin-top: 308px;
  border-radius: 8px;
  background: #d3d5da;
}

.browse {
  display: flex;
  flex-direction: column;
  align-items: center;
  gap: 17px;
  padding: 8px 0 12px;
}

.pointer {
  position: absolute;
  left: 2px;
  bottom: 78px;
}

.sidebar {
  grid-row: 1 / 3;
  grid-column: 4;
  display: flex;
  flex-direction: column;
  align-items: center;
  gap: 30px;
  padding: 15px 3px 0 0;
}

.grip {
  width: 30px;
  height: 7px;
  margin-bottom: 2px;
  border: solid #c6c8cd;
  border-width: 1px 0;
}

.sidebar .more {
  width: 58px;
  height: 68px;
  margin-top: auto;
  padding-top: 12px;
  justify-content: center;
  border-top: 1px solid #dcdfe4;
}

/* строка состояния */

.statusbar {
  flex: none;
  height: 43px;
  display: flex;
  align-items: center;
  background: #f5f7fa;
  border-top: 1px solid #dfe2e6;
}

.statusbar .pages-count {
  width: 118px;
  padding-left: 14px;
}

.words {
  width: 110px;
  padding-left: 13px;
}

.spell {
  width: 110px;
  height: 36px;
  margin-right: 11px;
  padding-left: 5px;
  gap: 4px;
  background: #e8f0fa;
}

.spell + .caret {
  margin: 0 7px 0 -9px;
}

.proof {
  gap: 4px;
  padding-left: 13px;
}

.compat {
  width: 107px;
  padding-left: 28px;
}

.fonts {
  gap: 5px;
  padding-left: 18px;
}

.views {
  margin-left: auto;
  padding-right: 16px;
  display: flex;
  align-items: center;
}

.views .tool {
  width: 39px;
}

.views .rule {
  margin: 0 8px;
}

.views .on {
  width: 35px;
  margin: 0 4px 0 3px;
}

.zoom {
  width: 68px;
  gap: 8px;
  padding-left: 4px;
}

.step {
  width: 28px;
  justify-content: center;
}

.plus {
  margin-right: 3px;
}

.views input {
  appearance: none;
  width: 207px;
  height: 22px;
  margin: 0 11px 0 12px;
  background: linear-gradient(90deg, #4d5366 32%, #cdd0d6 32%) 0 10px / 100% 1px no-repeat;
}

.views input::-webkit-slider-thumb {
  appearance: none;
  width: 19px;
  height: 19px;
  border: 1px solid #555;
  border-radius: 50%;
  background: #e8e8e8;
}

/* панель задач */

.taskbar {
  flex: none;
  height: 60px;
  display: flex;
  align-items: center;
  background: linear-gradient(90deg, #253040 65%, #222 82%);
  color: #fff;
}

.start {
  margin-left: 23px;
}

.swirl {
  margin: 0 22px 0 45px;
}

.desk-search {
  display: flex;
  align-items: center;
  width: 275px;
  height: 43px;
  padding-left: 7px;
  background: #eee;
  color: #111;
  font-size: 15px;
}

.desk-search .caret {
  margin: 0 8px 0 2px;
}

.desk-search input {
  flex: 1;
  min-width: 0;
}

.desk-search button {
  width: 70px;
  height: 43px;
  justify-content: center;
  background: #2388ff;
  color: #fff;
}

.handle {
  width: 5px;
  height: 36px;
  margin: 0 23px 0 11px;
  border: solid #525b68;
  border-width: 0 1px;
}

.apps {
  display: flex;
  align-items: center;
  gap: 14px;
}

.apps button {
  width: 61px;
  height: 60px;
  justify-content: center;
}

.apps .open {
  border-bottom: 3px solid #76b9ed;
}

.apps .current {
  width: 73px;
  margin-left: -5px;
  background: #4e5763;
}

.tray {
  margin-left: auto;
  display: flex;
  align-items: center;
  gap: 12px;
}

.weather {
  position: relative;
  display: flex;
  align-items: center;
  gap: 13px;
  margin-right: -16px;
  font-size: 20px;
}

.cpu {
  position: absolute;
  left: 50px;
  top: -9px;
  margin: 0;
  width: 74px;
  text-align: center;
  font-size: 18px;
}

.tray-ico {
  width: 24px;
  height: 24px;
}

.ime {
  width: 24px;
  text-align: center;
}

.qb {
  margin: 0 16px 0 8px;
}

.tray time {
  text-align: center;
}

.notice {
  position: relative;
  margin: 0 7px 0 20px;
}

.notice b {
  position: absolute;
  left: 15px;
  top: 12px;
  width: 20px;
  height: 20px;
  background: #e10a0a;
  text-align: center;
  font-size: 13px;
  font-weight: normal;
  line-height: 20px;
}

.peek {
  width: 8px;
  height: 60px;
  border-left: 1px solid #777;
}

/* индикаторы у краёв экрана */

.meter {
  position: absolute;
}

.meter-left {
  left: 3px;
  top: 9px;
  width: 12px;
  height: 86px;
  border-radius: 5px;
  background: repeating-linear-gradient(#4caf50 0 2px, #4a6350 2px 4px) 0 70px / 12px 14px no-repeat, linear-gradient(#2c3f6d 42%, #656565 42%);
}

.meter-right {
  right: 0;
  top: 174px;
  width: 15px;
  height: 88px;
  border-radius: 5px 0 0 5px;
  background:
    repeating-linear-gradient(transparent 0 2px, #484b5c 2px 3px) 6px 10px / 5px 68px no-repeat,
    linear-gradient(#333645 30px, #c5c84e 30px, #6cb36a 50px, #38c3a3) 6px 10px / 5px 68px no-repeat,
    #484b5c;
}
```
